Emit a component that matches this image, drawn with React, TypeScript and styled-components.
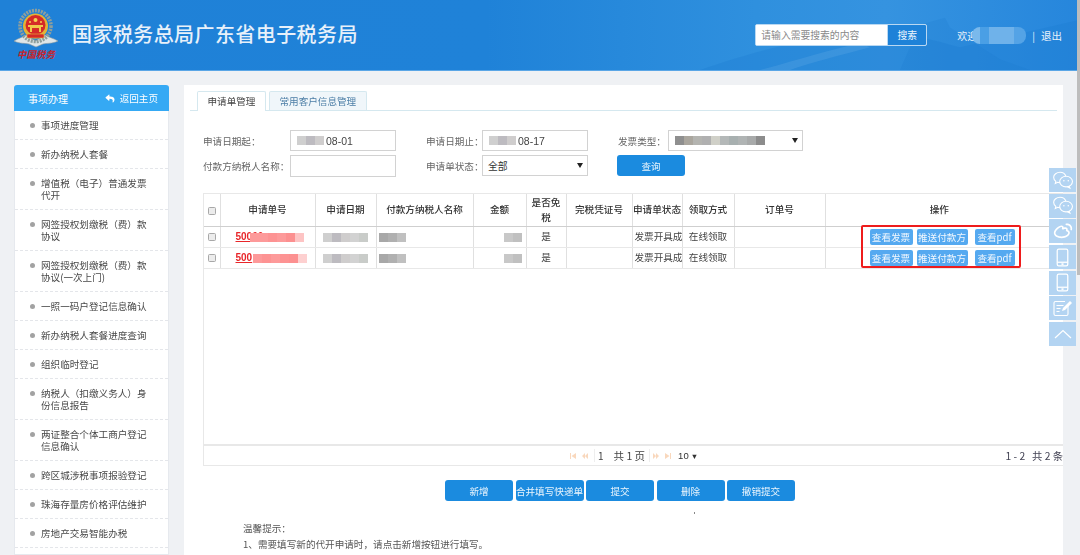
import React from "react";
import styled, { createGlobalStyle } from "styled-components";
import { FaReply } from "react-icons/fa";
import { RiWeiboLine } from "react-icons/ri";

const Global = createGlobalStyle`
  html, body { margin: 0; padding: 0; height: 555px; overflow: hidden; background: #eff1f4; }
  body { font-family: "Noto Sans CJK SC", "Noto Sans", sans-serif; font-size: 9.6px; color: #444; }
  * { box-sizing: border-box; }
`;

const Page = styled.div`
  position: relative;
  width: 1080px;
  height: 555px;
  overflow: hidden;
  filter: blur(0.4px);
`;

/* ---------- header ---------- */
const Header = styled.header`
  position: relative;
  height: 71px;
  display: flex;
  align-items: center;
  padding: 0 18px 0 13px;
  background: linear-gradient(90deg, #1f81d7 0%, #1f82d8 45%, #2f90de 70%, #3593e0 82%, #2686dc 100%);
  border-bottom: 1px solid #5aa6e6;
  overflow: hidden;
`;
const HeaderArt = styled.svg`
  position: absolute;
  inset: 0;
  width: 100%;
  height: 100%;
`;
const Logo = styled.div`
  position: relative;
  width: 46px;
  display: flex;
  flex-direction: column;
  align-items: center;
  margin-top: -1px;
`;
const LogoScript = styled.span`
  font-family: "Liberation Serif", "Noto Sans CJK SC", serif;
  font-size: 9.5px;
  line-height: 11px;
  font-weight: 700;
  font-style: italic;
  color: #c8232b;
  white-space: nowrap;
`;
const Title = styled.h1`
  position: relative;
  margin: -3px 0 0 13px;
  font-size: 20px;
  letter-spacing: 0.42px;
  font-weight: 500;
  line-height: 26px;
  color: #e8f1fa;
  white-space: nowrap;
`;
const HeaderRight = styled.div`
  position: relative;
  margin-left: auto;
  display: flex;
  align-items: center;
`;
const SearchBox = styled.div`
  width: 172px;
  height: 22px;
  display: flex;
  border: 1px solid #b9d8f2;
  border-radius: 2px;
  overflow: hidden;
  background: #fff;
`;
const SearchInput = styled.input`
  flex: 1;
  min-width: 0;
  border: 0;
  outline: 0;
  padding: 0 5px;
  font: inherit;
  font-size: 9.8px;
  &::placeholder { color: #888; opacity: 1; }
`;
const SearchButton = styled.button`
  width: 39px;
  border: 0;
  border-left: 1px solid #b9d8f2;
  background: #1e82d8;
  color: #eef6fd;
  font: inherit;
  font-size: 9.8px;
  padding: 0;
`;
const Welcome = styled.span`
  margin-left: 30px;
  width: 75px;
  display: flex;
  align-items: center;
  font-size: 10px;
  color: #e8f1fa;
  white-space: nowrap;
`;
const WelcomeSmudge = styled.span`
  display: block;
  width: 54px;
  height: 17px;
  margin-left: -5px;
  border-radius: 8px;
  background: linear-gradient(90deg, #7ab9ec 0 14%, #4a9fe5 14% 32%, #6fb2ea 32% 78%, #54a3e6 78%);
`;
const Pipe = styled.span`
  color: #e8f1fa;
  font-size: 10px;
  margin-right: 6px;
`;
const Logout = styled.span`
  color: #e8f1fa;
  font-size: 10.5px;
`;

/* ---------- body ---------- */
const Body = styled.div`
  display: flex;
  gap: 15px;
  padding: 14px 17px 0 14px;
  height: 484px;
`;
const Sidebar = styled.aside`
  width: 155px;
  flex: none;
  background: #fff;
  border: 1px solid #e6e9ee;
  border-top: 0;
  border-radius: 3px 3px 0 0;
`;
const SideHead = styled.div`
  height: 26px;
  margin: 0 -1px;
  padding: 0 11px 0 14px;
  display: flex;
  align-items: center;
  justify-content: space-between;
  background: #35a9f4;
  border-radius: 3px 3px 0 0;
  color: #fff;
`;
const SideTitle = styled.span`
  font-size: 10px;
`;
const SideBack = styled.span`
  display: flex;
  align-items: center;
  gap: 5px;
  font-size: 9.6px;
  svg { width: 10px; height: 9px; }
`;
const SideList = styled.ul`
  list-style: none;
  margin: 0;
  padding: 0;
`;
const SideItem = styled.li`
  position: relative;
  padding: 8px 21px 8px 26px;
  line-height: 12px;
  color: #484848;
  border-bottom: 1px dashed #e4e6ea;
  &::before {
    content: "";
    position: absolute;
    left: 15px;
    top: 12px;
    width: 5px;
    height: 5px;
    border-radius: 50%;
    background: #a2a2a2;
  }
`;

const Main = styled.main`
  width: 879px;
  flex: none;
  background: #fff;
  padding-top: 6px;
  height: 100%;
  overflow: hidden;
`;
const Tabs = styled.div`
  display: flex;
  gap: 3px;
  margin: 0 6px;
  padding-left: 7px;
  height: 20px;
  border-bottom: 1px solid #d5e8ef;
`;
const Tab = styled.div<{ $active?: boolean }>`
  height: ${(p) => (p.$active ? "20px" : "19px")};
  padding: 0 9.5px;
  line-height: 18px;
  border: 1px solid #d5e8ef;
  border-bottom: 0;
  border-radius: 2px 2px 0 0;
  background: ${(p) => (p.$active ? "#fff" : "#f0f6fa")};
  color: ${(p) => (p.$active ? "#444" : "#4c7ea6")};
`;

const FormGrid = styled.div`
  display: grid;
  grid-template-columns: 87px 106px 30px 56px 106px 30px 50px 135px;
  grid-auto-rows: 21px;
  row-gap: 4px;
  margin: 19px 0 0 19px;
  align-items: center;
  width: 600px;
`;
const Label = styled.label<{ $start?: number }>`
  color: #666;
  white-space: nowrap;
  ${(p) => (p.$start ? `grid-column-start: ${p.$start};` : "")}
`;
const Field = styled.div`
  height: 21px;
  border: 1px solid #d2d2d2;
  display: flex;
  align-items: center;
  padding-left: 6px;
  background: #fff;
  color: #444;
  font-family: "Liberation Sans", sans-serif;
  font-size: 10.5px;
`;
const FieldText = styled.span`
  position: relative;
  margin-left: 2px;
`;
const PlainInput = styled.input`
  height: 22px;
  width: 106px;
  border: 1px solid #d2d2d2;
  outline: 0;
  background: #fff;
`;
const SelectBox = styled.div<{ $pad?: number }>`
  position: relative;
  height: 21px;
  border: 1px solid #d2d2d2;
  display: flex;
  align-items: center;
  padding-left: ${(p) => p.$pad ?? 5}px;
  background: #fff;
  color: #333;
  font-size: 9.8px;
  &::after {
    content: "";
    position: absolute;
    right: 4px;
    top: 7px;
    border-left: 3px solid transparent;
    border-right: 3px solid transparent;
    border-top: 5px solid #222;
  }
`;
const QueryButton = styled.button`
  grid-column: 7 / span 2;
  width: 68px;
  height: 21px;
  margin-left: -1px;
  border: 0;
  border-radius: 3px;
  background: #1b8bdf;
  color: #e8f4fc;
  font: inherit;
  padding: 0;
`;

const Cell = styled.span<{ $c: string }>`
  display: block;
  width: 9px;
  height: 100%;
  background: ${(p) => p.$c};
`;
const SmudgeWrap = styled.span<{ $shift?: number; $halo?: boolean }>`
  position: relative;
  display: inline-flex;
  height: 9px;
  vertical-align: middle;
  margin-left: ${(p) => p.$shift ?? 0}px;
  ${(p) => (p.$halo ? "box-shadow: 0 0 3px 3px #fff;" : "")}
  border-radius: 1px;
`;
const Smudge = ({ cells, shift, halo }: { cells: string[]; shift?: number; halo?: boolean }) => (
  <SmudgeWrap $shift={shift} $halo={halo}>
    {cells.map((c, i) => (
      <Cell key={i} $c={c} />
    ))}
  </SmudgeWrap>
);

/* ---------- table ---------- */
const Frame = styled.div`
  position: relative;
  margin: 17px 0 0 19px;
  width: 860px;
  height: 273px;
  border: 1px solid #e8e8e8;
  border-right: 0;
  display: flex;
  flex-direction: column;
  overflow: hidden;
`;
const Table = styled.table`
  width: 859px;
  table-layout: fixed;
  border-collapse: collapse;
`;
const Th = styled.th<{ $pad?: string }>`
  height: 32px;
  padding: ${(p) => p.$pad ?? "0"};
  font-weight: 500;
  color: #333;
  line-height: 15px;
  text-align: center;
  border-right: 1px solid #e0e0e0;
  border-bottom: 1px solid #cfcfcf;
  &:last-child { border-right: 0; }
`;
const Td = styled.td<{ $align?: string; $pad?: number }>`
  height: 21px;
  padding: 0 ${(p) => (p.$align === "right" ? p.$pad ?? 0 : 0)}px 0 ${(p) => (p.$align === "left" ? p.$pad ?? 0 : 0)}px;
  line-height: 17px;
  text-align: ${(p) => p.$align ?? "center"};
  color: #444;
  white-space: nowrap;
  overflow: hidden;
  border-right: 1px solid #e0e0e0;
  border-bottom: 1px solid #e8e8e8;
  &:last-child { border-right: 0; }
`;
const Check = styled.span`
  display: inline-block;
  width: 8px;
  height: 8px;
  vertical-align: middle;
  border: 1px solid #a8a8a8;
  border-radius: 1.5px;
  background: #ececec;
`;
const OrderLink = styled.span`
  color: #e8262a;
  font-weight: 700;
  font-family: "Liberation Sans", sans-serif;
  font-size: 10px;
  text-decoration: underline;
`;
const Ops = styled.div`
  display: flex;
  padding-left: 44px;
`;
const OpButton = styled.span<{ $w: number; $gap?: number }>`
  width: ${(p) => p.$w}px;
  height: 16px;
  margin-right: ${(p) => p.$gap ?? 4}px;
  border-radius: 2px;
  background: #55a9f0;
  color: #f2f8fe;
  font-size: 9.6px;
  line-height: 16px;
  text-align: center;
`;
const RedBox = styled.div`
  position: absolute;
  left: 657px;
  top: 31px;
  width: 160px;
  height: 43px;
  border: 2px solid #ee1c1c;
  border-radius: 2px;
`;
const Pager = styled.div`
  margin-top: auto;
  height: 21px;
  flex: none;
  display: flex;
  align-items: center;
  padding-left: 366px;
  border-top: 2px solid #e8e8e8;
  white-space: nowrap;
  color: #555;
`;
const PagerIcon = styled.svg`
  width: 6px;
  height: 6px;
  margin-right: 6px;
  fill: #f9d8bd;
`;
const PagerSep = styled.span`
  width: 1px;
  height: 13px;
  background: #eee;
  margin: 0 3px 0 0;
`;
const PagerText = styled.span<{ $gap?: number; $size?: number }>`
  margin-right: ${(p) => p.$gap ?? 0}px;
  font-size: ${(p) => p.$size ?? 10}px;
  color: #444;
`;
const PagerSize = styled.span`
  margin-left: 1px;
  font-family: "Liberation Sans", sans-serif;
  font-size: 9.5px;
  color: #333;
  &::after { content: " ▼"; font-size: 7.5px; }
`;
const PagerRight = styled.span`
  margin-left: auto;
  flex: none;
  font-size: 10.3px;
  color: #445;
`;

const Actions = styled.div`
  display: flex;
  gap: 2.5px;
  margin: 14px 0 0 261px;
`;
const ActionButton = styled.button`
  width: 68px;
  height: 21px;
  border: 0;
  border-radius: 3px;
  background: #1b8bdf;
  color: #eaf5fd;
  font: inherit;
  padding: 0;
  white-space: nowrap;
`;
const Notes = styled.div`
  position: relative;
  margin: 19px 0 0 59px;
  line-height: 16px;
  color: #555;
  &::after {
    content: "";
    position: absolute;
    left: 451px;
    top: -8px;
    width: 1px;
    height: 2px;
    background: #888;
  }
`;

/* ---------- floating rail + scrollbar ---------- */
const Rail = styled.div`
  position: absolute;
  left: 1049px;
  top: 168px;
  display: flex;
  flex-direction: column;
  gap: 1.7px;
`;
const RailButton = styled.div`
  width: 27px;
  height: 24px;
  background: #b3d4f2;
  display: flex;
  align-items: center;
  justify-content: center;
  svg { display: block; }
`;
const ScrollThumb = styled.div`
  position: absolute;
  top: 0;
  right: 0;
  width: 3px;
  height: 275px;
  background: #bdbdbd;
`;

const Emblem = () => (
  <svg width="46" height="42" viewBox="0 0 46 42">
    <path d="M1 33 C6 30 10 29 13 27 L22.500 33 L32 27 C35 29 40 30 45 33 C39 36 34 35 30 36 L23 39 L16 36 C12 35 7 36 1 33 Z" fill="#dfe6e8" stroke="#8a999f" strokeWidth=".6" />
    <circle cx="22.500" cy="18" r="15.500" fill="none" stroke="#8f9f9c" strokeWidth="3.600" strokeDasharray="2 1" />
    <circle cx="22.500" cy="18" r="12.500" fill="#e3b335" />
    <circle cx="22.500" cy="17" r="10" fill="#d52a28" />
    <rect x="15" y="17" width="15" height="2" fill="#f0c94a" />
    <rect x="17" y="19" width="11" height="5" fill="#f0c94a" />
    <rect x="19" y="20" width="7" height="4" fill="#d52a28" />
    <circle cx="22.500" cy="12" r="2" fill="#f4d24f" />
    <circle cx="17" cy="14" r="1" fill="#f4d24f" />
    <circle cx="28" cy="14" r="1" fill="#f4d24f" />
    <rect x="14" y="26" width="17" height="4" rx="1" fill="#d52a28" stroke="#e8b93a" strokeWidth=".6" />
  </svg>
);

const Bubbles = () => (
  <svg width="22" height="19" viewBox="0 0 20 17" fill="none" stroke="#fff" strokeWidth="1">
    <path d="M12.500 4.400C11.800 2.400 9.800 1 7.300 1 4.300 1 1.500 3 1.500 5.600c0 1.500.8 2.800 2 3.700L3 11.200l2.200-1.100c.6.2 1.200.3 1.900.3" />
    <ellipse cx="12.800" cy="9.500" rx="5.800" ry="4.800" />
    <path d="M15.500 13.400l.8 2-2.400-1.300" />
    <circle cx="10.800" cy="8.800" r=".7" fill="#fff" stroke="none" />
    <circle cx="14.800" cy="8.800" r=".7" fill="#fff" stroke="none" />
  </svg>
);
const Phone = () => (
  <svg width="13" height="19" viewBox="0 0 12 18" fill="none" stroke="#fff" strokeWidth="1.200">
    <rect x="1" y="1" width="10" height="16" rx="1.500" />
    <path d="M1 13.500h10" />
    <rect x="5" y="14.500" width="2" height="1.500" fill="#fff" stroke="none" />
  </svg>
);
const Edit = () => (
  <svg width="20" height="18" viewBox="0 0 20 18" fill="none" stroke="#fff" strokeWidth="1.100">
    <path d="M15 6v9a1.500 1.500 0 0 1-1.500 1.500H2.500A1.500 1.500 0 0 1 1 15V4a1.500 1.500 0 0 1 1.500-1.500H12" />
    <path d="M3.500 6.500h7M3.500 9.500h4M3.500 12.500h3" />
    <path d="M9 12l1-3 7-7 2 2-7 7z" fill="#fff" stroke="none" />
  </svg>
);
const Chevron = () => (
  <svg width="18" height="10" viewBox="0 0 18 10" fill="none" stroke="#fff" strokeWidth="1.200">
    <path d="M1 9 L9 1.500 L17 9" />
  </svg>
);
const PagerGlyph = ({ d }: { d: string }) => (
  <PagerIcon viewBox="0 0 6 6">
    <path d={d} />
  </PagerIcon>
);

const MENU = [
  "事项进度管理",
  "新办纳税人套餐",
  "增值税（电子）普通发票代开",
  "网签授权划缴税（费）款协议",
  "网签授权划缴税（费）款协议(一次上门)",
  "一照一码户登记信息确认",
  "新办纳税人套餐进度查询",
  "组织临时登记",
  "纳税人（扣缴义务人）身份信息报告",
  "两证整合个体工商户登记信息确认",
  "跨区城涉税事项报验登记",
  "珠海存量房价格评估维护",
  "房地产交易智能办税",
  "",
];
const COLS = [16, 95, 61, 97, 53, 40, 66, 50, 52, 91, 238];
const HEADS = ["申请单号", "申请日期", "付款方纳税人名称", "金额", "是否免税", "完税凭证号", "申请单状态", "领取方式", "订单号", "操作"];
const HEAD_PAD: Record<string, string> = { 是否免税: "0 4px", 操作: "0 10px 0 0" };
const G = ["#cfcfcf", "#bdbbc0", "#cfcdcd", "#d2d2d2", "#c9ccc9"];
const ROWS = [
  { id: "50000", shift: -13, red: ["#fd9a9a", "#fd9a9a", "#fd9393", "#fd9a9a", "#fc9090", "#fdc4c4"] },
  { id: "500", shift: 1, red: ["#fd9a9a", "#fd9393", "#fd9a9a", "#fd9393", "#fc9090", "#fdd0d0"] },
];

export default function App() {
  return (
    <Page>
      <Global />
      <Header>
        <HeaderArt viewBox="0 0 1080 71" preserveAspectRatio="none">
          <path d="M700 71 C760 50 800 40 860 34 C900 30 930 40 960 48 L1080 20 L1080 71 Z" fill="#1b7bd1" opacity=".3" />
          <path d="M900 71 L920 25 L945 18 L950 28 L1000 60 L1030 71 Z" fill="#1b78cf" opacity=".2" />
          <path d="M760 71 C800 60 830 50 860 44 L870 48 C840 56 810 64 790 71 Z" fill="#5fa9e6" opacity=".3" />
        </HeaderArt>
        <Logo>
          <Emblem />
          <LogoScript>中国税务</LogoScript>
        </Logo>
        <Title>国家税务总局广东省电子税务局</Title>
        <HeaderRight>
          <SearchBox>
            <SearchInput placeholder="请输入需要搜索的内容" />
            <SearchButton>搜索</SearchButton>
          </SearchBox>
          <Welcome>
            欢迎
            <WelcomeSmudge />
          </Welcome>
          <Pipe>|</Pipe>
          <Logout>退出</Logout>
        </HeaderRight>
      </Header>
      <Body>
        <Sidebar>
          <SideHead>
            <SideTitle>事项办理</SideTitle>
            <SideBack>
              <FaReply />
              返回主页
            </SideBack>
          </SideHead>
          <SideList>
            {MENU.map((m, i) => (
              <SideItem key={i}>{m}</SideItem>
            ))}
          </SideList>
        </Sidebar>
        <Main>
          <Tabs>
            <Tab $active>申请单管理</Tab>
            <Tab>常用客户信息管理</Tab>
          </Tabs>
          <FormGrid>
            <Label>申请日期起：</Label>
            <Field>
              <Smudge cells={G.slice(0, 3)} halo />
              <FieldText>08-01</FieldText>
            </Field>
            <Label $start={4}>申请日期止：</Label>
            <Field>
              <Smudge cells={G.slice(0, 3)} halo />
              <FieldText>08-17</FieldText>
            </Field>
            <Label $start={7}>发票类型：</Label>
            <SelectBox $pad={6}>
              <Smudge cells={["#8f8f8f", "#aaa69e", "#b4b4b0", "#b0b0b0", "#d0d0c8", "#b4b8b8", "#a8b0b0", "#b0b4b4", "#a8aaaa", "#8c8c8c"]} halo />
            </SelectBox>
            <Label>付款方纳税人名称：</Label>
            <PlainInput />
            <Label $start={4}>申请单状态：</Label>
            <SelectBox>全部</SelectBox>
            <QueryButton>查询</QueryButton>
          </FormGrid>
          <Frame>
            <Table>
              <colgroup>
                {COLS.map((w, i) => (
                  <col key={i} width={w} />
                ))}
              </colgroup>
              <thead>
                <tr>
                  <Th>
                    <Check />
                  </Th>
                  {HEADS.map((h) => (
                    <Th key={h} $pad={HEAD_PAD[h]}>{h}</Th>
                  ))}
                </tr>
              </thead>
              <tbody>
                {ROWS.map((r) => (
                  <tr key={r.id}>
                    <Td>
                      <Check />
                    </Td>
                    <Td $align="left" $pad={15}>
                      <OrderLink>{r.id}</OrderLink>
                      <Smudge cells={r.red} shift={r.shift} />
                    </Td>
                    <Td>
                      <Smudge cells={G} halo />
                    </Td>
                    <Td $align="left" $pad={2}>
                      <Smudge cells={["#a8a8a8", "#b0b0b0", "#c0c0c0"]} />
                    </Td>
                    <Td $align="right" $pad={4}>
                      <Smudge cells={["#c8c8c8", "#c0c0c0"]} halo />
                    </Td>
                    <Td>是</Td>
                    <Td />
                    <Td $align="left" $pad={2}>发票开具成功</Td>
                    <Td>在线领取</Td>
                    <Td />
                    <Td>
                      <Ops>
                        <OpButton $w={43}>查看发票</OpButton>
                        <OpButton $w={51} $gap={7}>推送付款方</OpButton>
                        <OpButton $w={40}>查看pdf</OpButton>
                      </Ops>
                    </Td>
                  </tr>
                ))}
              </tbody>
            </Table>
            <RedBox />
            <Pager>
              <PagerGlyph d="M0 0h1v6H0zM6 0v6L1.500 3z" />
              <PagerGlyph d="M3 0v6L0 3zM6 0v6L3 3z" />
              <PagerSep />
              <PagerText $gap={10}>1</PagerText>
              <PagerText $gap={4} $size={10.5}>共 1 页</PagerText>
              <PagerSep />
              <PagerGlyph d="M0 0v6l3-3zM3 0v6l3-3z" />
              <PagerGlyph d="M0 0v6l4.500-3zM5 0h1v6H5z" />
              <PagerSize>10</PagerSize>
              <PagerRight>1 - 2 &nbsp;&nbsp;共 2 条</PagerRight>
            </Pager>
          </Frame>
          <Actions>
            <ActionButton>新增</ActionButton>
            <ActionButton>合并填写快递单</ActionButton>
            <ActionButton>提交</ActionButton>
            <ActionButton>删除</ActionButton>
            <ActionButton>撤销提交</ActionButton>
          </Actions>
          <Notes>
            <div>温馨提示：</div>
            <div>1、需要填写新的代开申请时，请点击新增按钮进行填写。</div>
          </Notes>
        </Main>
      </Body>
      <Rail>
        <RailButton><Bubbles /></RailButton>
        <RailButton><Bubbles /></RailButton>
        <RailButton><RiWeiboLine color="#fff" size={20} /></RailButton>
        <RailButton><Phone /></RailButton>
        <RailButton><Phone /></RailButton>
        <RailButton><Edit /></RailButton>
        <RailButton><Chevron /></RailButton>
      </Rail>
      <ScrollThumb />
    </Page>
  );
}
